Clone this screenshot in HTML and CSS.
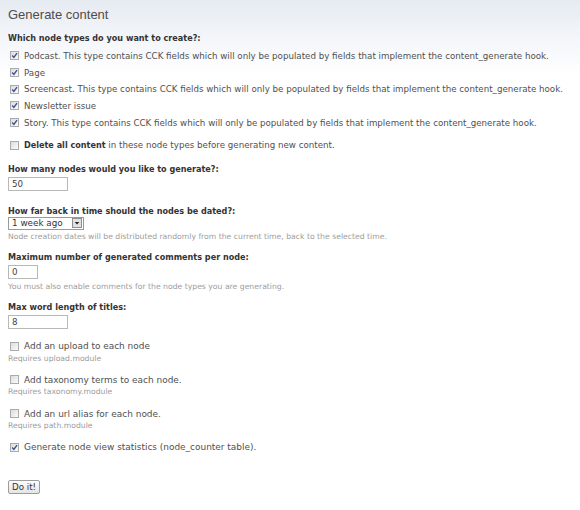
FILE: index.html
```html
<!DOCTYPE html>
<html lang="en">
<head>
    <meta charset="UTF-8">
    <title>Generate content</title>
    <link rel="stylesheet" href="styles.css">
</head>
<body>

<h2 class="title">Generate content</h2>

<form class="generate-form">
    <div class="form-item">
        <div class="label">Which node types do you want to create?:</div>
        <div class="checkboxes">
            <label class="option"><span class="box checked"><svg viewBox="0 0 7 7"><path d="M1.2 3.6 L2.9 5.4 L6 1.2" /></svg></span>Podcast. This type contains CCK fields which will only be populated by fields that implement the content_generate hook.</label>
            <label class="option"><span class="box checked"><svg viewBox="0 0 7 7"><path d="M1.2 3.6 L2.9 5.4 L6 1.2" /></svg></span>Page</label>
            <label class="option"><span class="box checked"><svg viewBox="0 0 7 7"><path d="M1.2 3.6 L2.9 5.4 L6 1.2" /></svg></span>Screencast. This type contains CCK fields which will only be populated by fields that implement the content_generate hook.</label>
            <label class="option"><span class="box checked"><svg viewBox="0 0 7 7"><path d="M1.2 3.6 L2.9 5.4 L6 1.2" /></svg></span>Newsletter issue</label>
            <label class="option"><span class="box checked"><svg viewBox="0 0 7 7"><path d="M1.2 3.6 L2.9 5.4 L6 1.2" /></svg></span>Story. This type contains CCK fields which will only be populated by fields that implement the content_generate hook.</label>
        </div>
    </div>

    <div class="form-item">
        <label class="option"><span class="box"></span><strong>Delete all content</strong>&nbsp;in these node types before generating new content.</label>
    </div>

    <div class="form-item">
        <div class="label">How many nodes would you like to generate?:</div>
        <input type="text" class="text wide" value="50">
    </div>

    <div class="form-item">
        <div class="label">How far back in time should the nodes be dated?:</div>
        <div class="select">1 week ago <span class="arrow"><svg viewBox="0 0 7 7"><path d="M1.5 2.6 L5.5 2.6 L3.5 4.8 Z" /></svg></span></div>
        <div class="description">Node creation dates will be distributed randomly from the current time, back to the selected time.</div>
    </div>

    <div class="form-item">
        <div class="label">Maximum number of generated comments per node:</div>
        <input type="text" class="text narrow" value="0">
        <div class="description">You must also enable comments for the node types you are generating.</div>
    </div>

    <div class="form-item">
        <div class="label">Max word length of titles:</div>
        <input type="text" class="text wide" value="8">
    </div>

    <div class="form-item extra">
        <label class="option big"><span class="box"></span>Add an upload to each node</label>
        <div class="description">Requires upload.module</div>
    </div>

    <div class="form-item extra">
        <label class="option big"><span class="box"></span>Add taxonomy terms to each node.</label>
        <div class="description">Requires taxonomy.module</div>
    </div>

    <div class="form-item extra">
        <label class="option big"><span class="box"></span>Add an url alias for each node.</label>
        <div class="description">Requires path.module</div>
    </div>

    <div class="form-item extra">
        <label class="option big"><span class="box checked"><svg viewBox="0 0 7 7"><path d="M1.2 3.6 L2.9 5.4 L6 1.2" /></svg></span>Generate node view statistics (node_counter table).</label>
    </div>

    <button type="button" class="submit">Do it!</button>
</form>

</body>
</html>
```

FILE: styles.css
```css
body {
    margin: 0;
    padding: 0 8px;
    min-height: 510px;
    box-sizing: border-box;
    background: linear-gradient(#e6ebf2 0, #f4f6fa 40px, #ffffff 75px);
    color: #505050;
    font-family: "DejaVu Sans", Verdana, sans-serif;
    font-size: 8.7px;
}
.title {
    font-family: "Liberation Sans", Arial, sans-serif;
    font-weight: normal;
    font-size: 13px;
    color: #4d4d4d;
    margin: 0;
    padding-top: 7px;
    line-height: 16px;
}
.generate-form {
    margin-top: 6px;
}
.form-item {
    display: flow-root;
    margin-bottom: 6px;
}
.form-item.extra {
    margin-bottom: 9.7px;
}
.label {
    font-weight: bold;
    font-size: 8.1px;
    color: #333;
    line-height: 12px;
    padding-top: 3px;
}
.checkboxes {
    margin-top: 3.5px;
}
.option {
    display: flex;
    align-items: center;
    height: 16.7px;
    white-space: nowrap;
}
.option strong {
    color: #333;
    font-size: 8.1px;
}
.option.big {
    font-size: 8.95px;
    height: 13px;
}
.box {
    display: inline-block;
    width: 7px;
    height: 7px;
    border: 1px solid #ababab;
    background: linear-gradient(135deg, #dcdcdc, #fbfbfb);
    margin: 0 5px 0 2px;
    flex: none;
}
.box svg {
    display: block;
    width: 7px;
    height: 7px;
    fill: none;
    stroke: #3f4f8f;
    stroke-width: 1.4;
}
.text {
    display: block;
    box-sizing: border-box;
    height: 14px;
    margin: 2px 0 0;
    padding: 0 3px;
    border: 1px solid #b8b8b8;
    background: #fff;
    font-family: "DejaVu Sans", Verdana, sans-serif;
    font-size: 8.7px;
    color: #444;
    outline: none;
}
.text:last-child {
    margin-bottom: 5px;
}
.text.wide {
    width: 60px;
}
.text.narrow {
    width: 30px;
}
.select {
    display: flex;
    align-items: center;
    justify-content: space-between;
    box-sizing: border-box;
    width: 76px;
    height: 13px;
    padding-left: 3px;
    border: 1px solid #9a9a9a;
    background: #fff;
    font-size: 8.8px;
    color: #333;
}
.arrow {
    display: inline-block;
    width: 8px;
    height: 8px;
    border: 1px solid #8f8f8f;
    background: #e2e2e2;
    margin-right: 1px;
}
.arrow svg {
    display: block;
    width: 8px;
    height: 8px;
    fill: #222;
}
.description {
    font-size: 7.7px;
    color: #9d9d9d;
    line-height: 11px;
    margin-top: 1.5px;
}
.extra .description {
    margin-top: 0;
}
.submit {
    display: block;
    margin-top: 26px;
    padding: 0 3px;
    height: 14px;
    border: 1px solid #9d9d9d;
    border-radius: 2px;
    background: linear-gradient(#fdfdfd, #e4e4e4);
    font-family: "DejaVu Sans", Verdana, sans-serif;
    font-size: 8.7px;
    color: #333;
}
```
